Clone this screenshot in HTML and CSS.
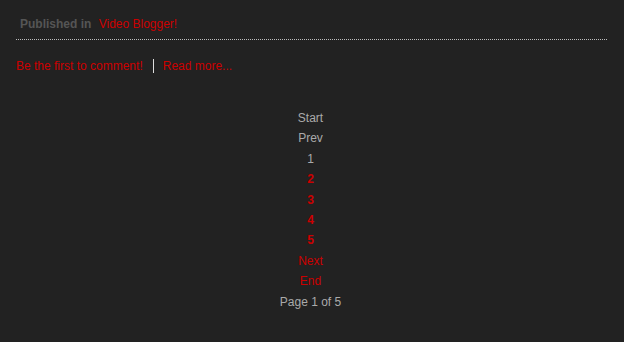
FILE: index.html
```html
<!DOCTYPE html>
<html lang="en">
<head>
  <meta charset="UTF-8" />
  <title>Video Blogger</title>
  <link rel="stylesheet" href="styles.css">
</head>
<body>
  <div class="article">
    <div class="published">
      <span class="label">Published in</span>
      <a href="#">Video Blogger!</a>
    </div>

    <div class="links">
      <a href="#">Be the first to comment!</a>
      <span class="sep"></span>
      <a href="#">Read more...</a>
    </div>
  </div>

  <div class="pager">
    <ul class="pagination">
      <li class="off">Start</li>
      <li class="off">Prev</li>
      <li class="off">1</li>
      <li><a href="#" class="num">2</a></li>
      <li><a href="#" class="num">3</a></li>
      <li><a href="#" class="num">4</a></li>
      <li><a href="#" class="num">5</a></li>
      <li><a href="#">Next</a></li>
      <li><a href="#">End</a></li>
    </ul>
    <div class="counter">Page 1 of 5</div>
  </div>
</body>
</html>
```

FILE: styles.css
```css
body {
  margin: 0;
  padding: 0 17px 0 16px;
  background: #222222;
  font-family: 'Liberation Sans', Arial, sans-serif;
  font-size: 12px;
  color: #aaaaaa;
}

a {
  color: #cc0000;
  text-decoration: none;
}

.published {
  margin-top: 17px;
  padding: 0 0 8px 4px;
  border-bottom: 1px dotted #bbbbbb;
  line-height: 14px;
}

.published .label {
  font-weight: bold;
  color: #555555;
  margin-right: 4px;
}

.links {
  margin-top: 19px;
  line-height: 14px;
  display: flex;
  align-items: center;
}

.sep {
  display: inline-block;
  width: 1px;
  height: 14px;
  background: #dddddd;
  margin: 0 9px 0 10px;
}

.pager {
  margin: 35px 2px 0 0;
  text-align: center;
}

.pagination {
  list-style: none;
  margin: 0;
  padding: 0;
}

.pagination li {
  line-height: 20.4px;
}

.pagination .off {
  color: #aaaaaa;
}

.pagination .num {
  font-weight: bold;
}

.counter {
  line-height: 20px;
}
```
